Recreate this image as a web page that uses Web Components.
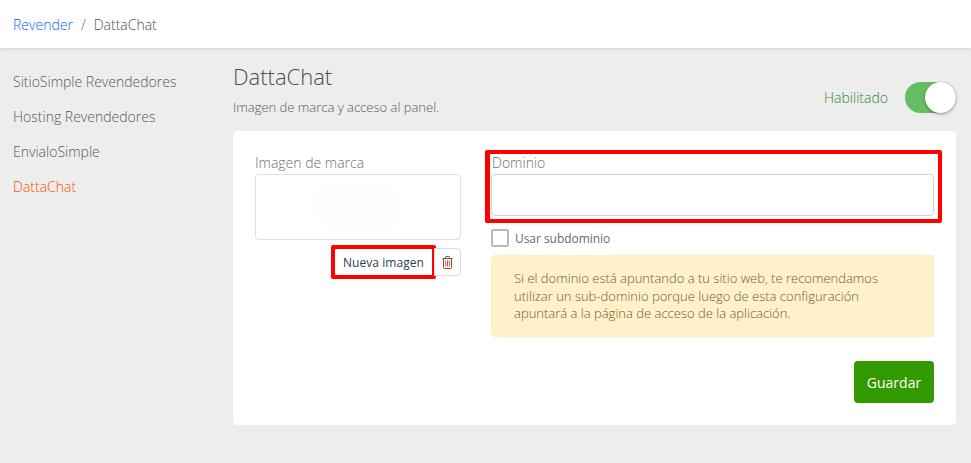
<!DOCTYPE html>
<html lang="es">
<head>
<meta charset="utf-8">
<title>DattaChat</title>
<style>
  html, body { margin: 0; height: 100%; }
  body {
    background: #ededed;
    font-family: "Open Sans", sans-serif;
    font-weight: 300;
    overflow: hidden;
  }
</style>
</head>
<body>
<app-header>
  <a slot="parent">Revender</a>
  <span slot="current">DattaChat</span>
</app-header>
<app-layout>
  <side-nav slot="nav">
    <nav-item>SitioSimple Revendedores</nav-item>
    <nav-item>Hosting Revendedores</nav-item>
    <nav-item>EnvialoSimple</nav-item>
    <nav-item active>DattaChat</nav-item>
  </side-nav>
  <page-head>
    <span slot="title">DattaChat</span>
    <span slot="subtitle">Imagen de marca y acceso al panel.</span>
    <toggle-switch slot="action">Habilitado</toggle-switch>
  </page-head>
  <settings-card>
    <brand-image slot="left"></brand-image>
    <domain-form slot="right"></domain-form>
  </settings-card>
</app-layout>

<script>
class AppHeader extends HTMLElement {
    connectedCallback() {
        this.attachShadow({ mode: 'open' });
        this.shadowRoot.innerHTML = `
            <style>
                :host {
                    display: flex;
                    align-items: center;
                    height: 48px;
                    padding-left: 13px;
                    background: #fff;
                    box-shadow: 0 1px 4px rgba(0, 0, 0, 0.12);
                    font-size: 14px;
                    color: #4a515b;
                }
                ::slotted([slot="parent"]) { color: #0f62ff; }
                .sep { margin: 0 8px; color: #5f6670; }
            </style>
            <slot name="parent"></slot><span class="sep">/</span><slot name="current"></slot>
        `;
    }
}

class AppLayout extends HTMLElement {
    connectedCallback() {
        this.attachShadow({ mode: 'open' });
        this.shadowRoot.innerHTML = `
            <style>
                :host {
                    display: grid;
                    grid-template-columns: 220px 723px;
                    padding: 15px 0 0 13px;
                }
            </style>
            <slot name="nav"></slot>
            <main><slot></slot></main>
        `;
    }
}

class SideNav extends HTMLElement {
    connectedCallback() {
        this.attachShadow({ mode: 'open' });
        this.shadowRoot.innerHTML = `
            <style>
                :host {
                    display: flex;
                    flex-direction: column;
                    gap: 15px;
                    padding-top: 9px;
                }
            </style>
            <slot></slot>
        `;
    }
}

class NavItem extends HTMLElement {
    connectedCallback() {
        this.attachShadow({ mode: 'open' });
        this.shadowRoot.innerHTML = `
            <style>
                :host {
                    display: block;
                    height: 20px;
                    line-height: 20px;
                    font-size: 14px;
                    color: #555b64;
                }
                :host([active]) { color: #ff5200; }
            </style>
            <slot></slot>
        `;
    }
}

class PageHead extends HTMLElement {
    connectedCallback() {
        this.attachShadow({ mode: 'open' });
        this.shadowRoot.innerHTML = `
            <style>
                :host {
                    display: flex;
                    justify-content: space-between;
                    height: 68px;
                }
                .title {
                    font-size: 22px;
                    line-height: 27px;
                    color: #474e58;
                }
                .subtitle {
                    margin-top: 8px;
                    font-size: 13px;
                    line-height: 18px;
                    color: #555b64;
                }
                .action { padding-top: 19px; }
            </style>
            <div>
                <div class="title"><slot name="title"></slot></div>
                <div class="subtitle"><slot name="subtitle"></slot></div>
            </div>
            <div class="action"><slot name="action"></slot></div>
        `;
    }
}

class ToggleSwitch extends HTMLElement {
    connectedCallback() {
        this.attachShadow({ mode: 'open' });
        this.shadowRoot.innerHTML = `
            <style>
                :host {
                    display: flex;
                    align-items: center;
                    gap: 17px;
                    font-size: 14px;
                    color: #2f8a3a;
                }
                .track {
                    position: relative;
                    width: 51px;
                    height: 31px;
                    border-radius: 16px;
                    background: #64bd63;
                }
                .knob {
                    position: absolute;
                    right: 0;
                    top: 0;
                    width: 31px;
                    height: 31px;
                    border-radius: 50%;
                    background: #fff;
                    box-shadow: 0 1px 3px rgba(0, 0, 0, 0.4);
                }
            </style>
            <slot></slot>
            <div class="track"><div class="knob"></div></div>
        `;
    }
}

class SettingsCard extends HTMLElement {
    connectedCallback() {
        this.attachShadow({ mode: 'open' });
        this.shadowRoot.innerHTML = `
            <style>
                :host {
                    display: grid;
                    grid-template-columns: 206px 443px;
                    column-gap: 30px;
                    box-sizing: border-box;
                    width: 723px;
                    height: 294px;
                    padding: 22px 22px 0;
                    background: #fff;
                    border-radius: 4px;
                }
            </style>
            <slot name="left"></slot>
            <slot name="right"></slot>
        `;
    }
}

class BrandImage extends HTMLElement {
    connectedCallback() {
        this.attachShadow({ mode: 'open' });
        this.shadowRoot.innerHTML = `
            <style>
                :host { display: block; }
                label {
                    display: block;
                    height: 21px;
                    line-height: 20px;
                    font-size: 14px;
                    color: #6b7078;
                }
                .preview {
                    display: flex;
                    align-items: center;
                    justify-content: center;
                    box-sizing: border-box;
                    height: 66px;
                    border: 1px solid #dfdfe6;
                    border-radius: 4px;
                }
                .blur {
                    width: 80px;
                    height: 42px;
                    border-radius: 40%;
                    background: #fcfcfc;
                    filter: blur(5px);
                }
                .actions {
                    display: flex;
                    justify-content: flex-end;
                    margin-top: 8px;
                }
                .btn {
                    position: relative;
                    box-sizing: border-box;
                    height: 28px;
                    display: flex;
                    align-items: center;
                    justify-content: center;
                    border: 1px solid #dcdcdc;
                    background: #fff;
                    font-size: 12px;
                    font-weight: 400;
                    letter-spacing: 0.05px;
                    color: #2f3d52;
                }
                .new {
                    width: 100px;
                    padding-right: 2px;
                    border-right: 0;
                    border-radius: 4px 0 0 4px;
                }
                .trash {
                    width: 27px;
                    border-radius: 0 4px 4px 0;
                }
                .mark {
                    position: absolute;
                    left: -4px;
                    right: -2px;
                    top: -4px;
                    bottom: -4px;
                    box-sizing: border-box;
                    border: 4px solid #f00;
                    border-radius: 2px;
                }
            </style>
            <label>Imagen de marca</label>
            <div class="preview"><div class="blur"></div></div>
            <div class="actions">
                <div class="btn new">Nueva imagen<div class="mark"></div></div>
                <div class="btn trash">
                    <svg width="11" height="13" viewBox="0 0 11 13" fill="none" stroke="#8a4a40" stroke-width="1">
                        <path d="M0.5 2.5h10M3.5 2.5V1.2q0-.7.7-.7h2.6q.7 0 .7.7v1.3"/>
                        <path d="M1.5 2.5v9q0 1 1 1h6q1 0 1-1v-9"/>
                        <path d="M3.7 4.5v6M5.5 4.5v6M7.3 4.5v6" stroke="#d0583a"/>
                    </svg>
                </div>
            </div>
        `;
    }
}

class DomainForm extends HTMLElement {
    connectedCallback() {
        this.attachShadow({ mode: 'open' });
        this.shadowRoot.innerHTML = `
            <style>
                :host { display: block; }
                .field { position: relative; }
                label {
                    display: block;
                    height: 21px;
                    line-height: 20px;
                    padding-left: 1px;
                    font-size: 14px;
                    color: #6b7078;
                }
                .input {
                    box-sizing: border-box;
                    height: 42px;
                    border: 1px solid #cfd0da;
                    border-radius: 4px;
                    background: #fff;
                }
                .mark {
                    position: absolute;
                    left: -6px;
                    right: -8px;
                    top: -3px;
                    bottom: -7px;
                    box-sizing: border-box;
                    border: 4px solid #f00;
                    border-left-width: 5px;
                    border-radius: 2px;
                }
                .check {
                    display: flex;
                    align-items: center;
                    gap: 6px;
                    margin-top: 13px;
                    height: 18px;
                    font-size: 12px;
                    font-weight: 400;
                    letter-spacing: -0.05px;
                    color: #666c75;
                }
                .box {
                    box-sizing: border-box;
                    width: 18px;
                    height: 18px;
                    border: 2px solid #b9b9b9;
                    border-radius: 2px;
                }
                .note {
                    box-sizing: border-box;
                    height: 82px;
                    margin-top: 8px;
                    padding: 14px 22px;
                    background: #fff1cb;
                    border: 1px solid #fdedc0;
                    border-radius: 4px;
                    font-size: 13px;
                    line-height: 17.6px;
                    color: #7a5a1a;
                }
                .foot {
                    display: flex;
                    justify-content: flex-end;
                    margin-top: 24px;
                }
                .save {
                    box-sizing: border-box;
                    width: 80px;
                    height: 42px;
                    display: flex;
                    align-items: center;
                    justify-content: center;
                    background: #339900;
                    border-radius: 4px;
                    font-size: 14px;
                    font-weight: 400;
                    color: #fff;
                }
            </style>
            <div class="field">
                <label>Dominio</label>
                <div class="input"></div>
                <div class="mark"></div>
            </div>
            <div class="check"><div class="box"></div><span>Usar subdominio</span></div>
            <div class="note">Si el dominio está apuntando a tu sitio web, te recomendamos utilizar un sub-dominio porque luego de esta configuración apuntará a la página de acceso de la aplicación.</div>
            <div class="foot"><div class="save">Guardar</div></div>
        `;
    }
}

customElements.define('app-header', AppHeader);
customElements.define('app-layout', AppLayout);
customElements.define('side-nav', SideNav);
customElements.define('nav-item', NavItem);
customElements.define('page-head', PageHead);
customElements.define('toggle-switch', ToggleSwitch);
customElements.define('settings-card', SettingsCard);
customElements.define('brand-image', BrandImage);
customElements.define('domain-form', DomainForm);
</script>
</body>
</html>
